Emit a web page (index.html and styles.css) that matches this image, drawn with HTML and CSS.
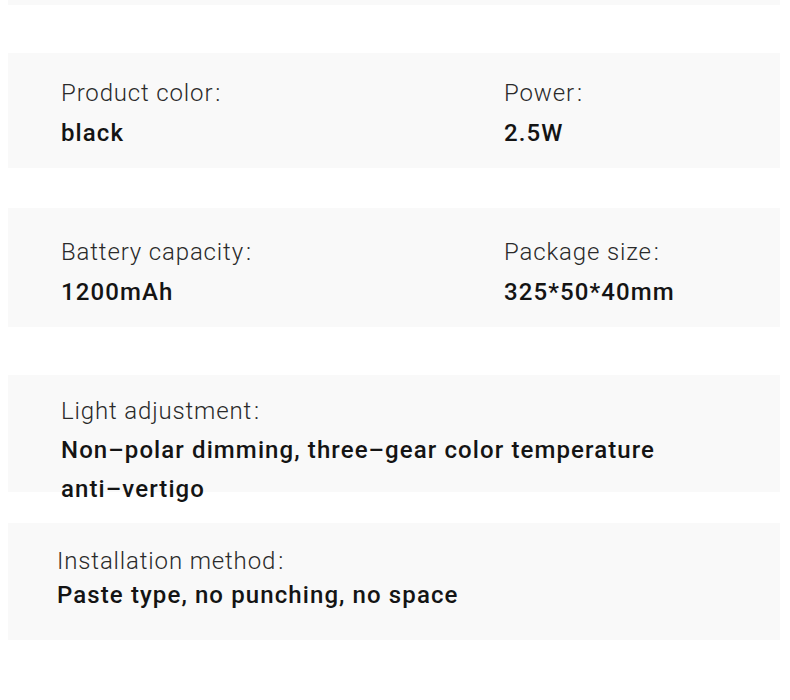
FILE: index.html
```html
<!DOCTYPE html>
<html lang="en">
<head>
<meta charset="utf-8">
<title>Specifications</title>
<link rel="stylesheet" href="styles.css">
</head>
<body>
<div class="page">
  <div class="panel panel-top"></div>
  <div class="panel p1">
    <div class="grid">
      <div class="cell"><div class="label">Product color<span class="colon">:</span></div><div class="value">black</div></div>
      <div class="cell"><div class="label">Power<span class="colon">:</span></div><div class="value">2.5W</div></div>
    </div>
  </div>
  <div class="panel p2">
    <div class="grid">
      <div class="cell"><div class="label">Battery capacity<span class="colon">:</span></div><div class="value">1200mAh</div></div>
      <div class="cell"><div class="label">Package size<span class="colon">:</span></div><div class="value">325*50*40mm</div></div>
    </div>
  </div>
  <div class="panel p3">
    <div class="label">Light adjustment<span class="colon">:</span></div>
    <div class="value">Non–polar dimming, three–gear color temperature<br>anti–vertigo</div>
  </div>
  <div class="panel p4">
    <div class="label">Installation method<span class="colon">:</span></div>
    <div class="value">Paste type, no punching, no space</div>
  </div>
</div>
</body>
</html>
```
FILE: styles.css
```css
html, body {
  margin: 0;
  padding: 0;
  background: #ffffff;
}
.page {
  width: 790px;
  height: 700px;
  display: flex;
  flex-direction: column;
  font-family: Roboto, "Liberation Sans", sans-serif;
  font-size: 24px;
  line-height: 40px;
}
.panel {
  margin-left: 8px;
  width: 772px;
  background: #f9f9f9;
  box-sizing: border-box;
  padding-left: 53px;
}
.panel-top {
  height: 5px;
}
.p1 {
  margin-top: 48px;
  height: 115px;
  padding-top: 20px;
}
.p2 {
  margin-top: 40px;
  height: 119px;
  padding-top: 24px;
}
.p3 {
  margin-top: 48px;
  height: 117px;
  padding-top: 17px;
  line-height: 39px;
}
.p4 {
  margin-top: 31px;
  height: 117px;
  padding-top: 23px;
  padding-left: 49px;
  line-height: 31px;
}
.p4 .value {
  margin-top: 3px;
}
.grid {
  display: grid;
  grid-template-columns: 443px 1fr;
}
.label {
  font-weight: 300;
  color: #2a2a2a;
  letter-spacing: 0.85px;
}
.colon {
  margin-left: 2px;
}
.value {
  font-weight: 500;
  color: #141414;
  letter-spacing: 1.1px;
}
```
